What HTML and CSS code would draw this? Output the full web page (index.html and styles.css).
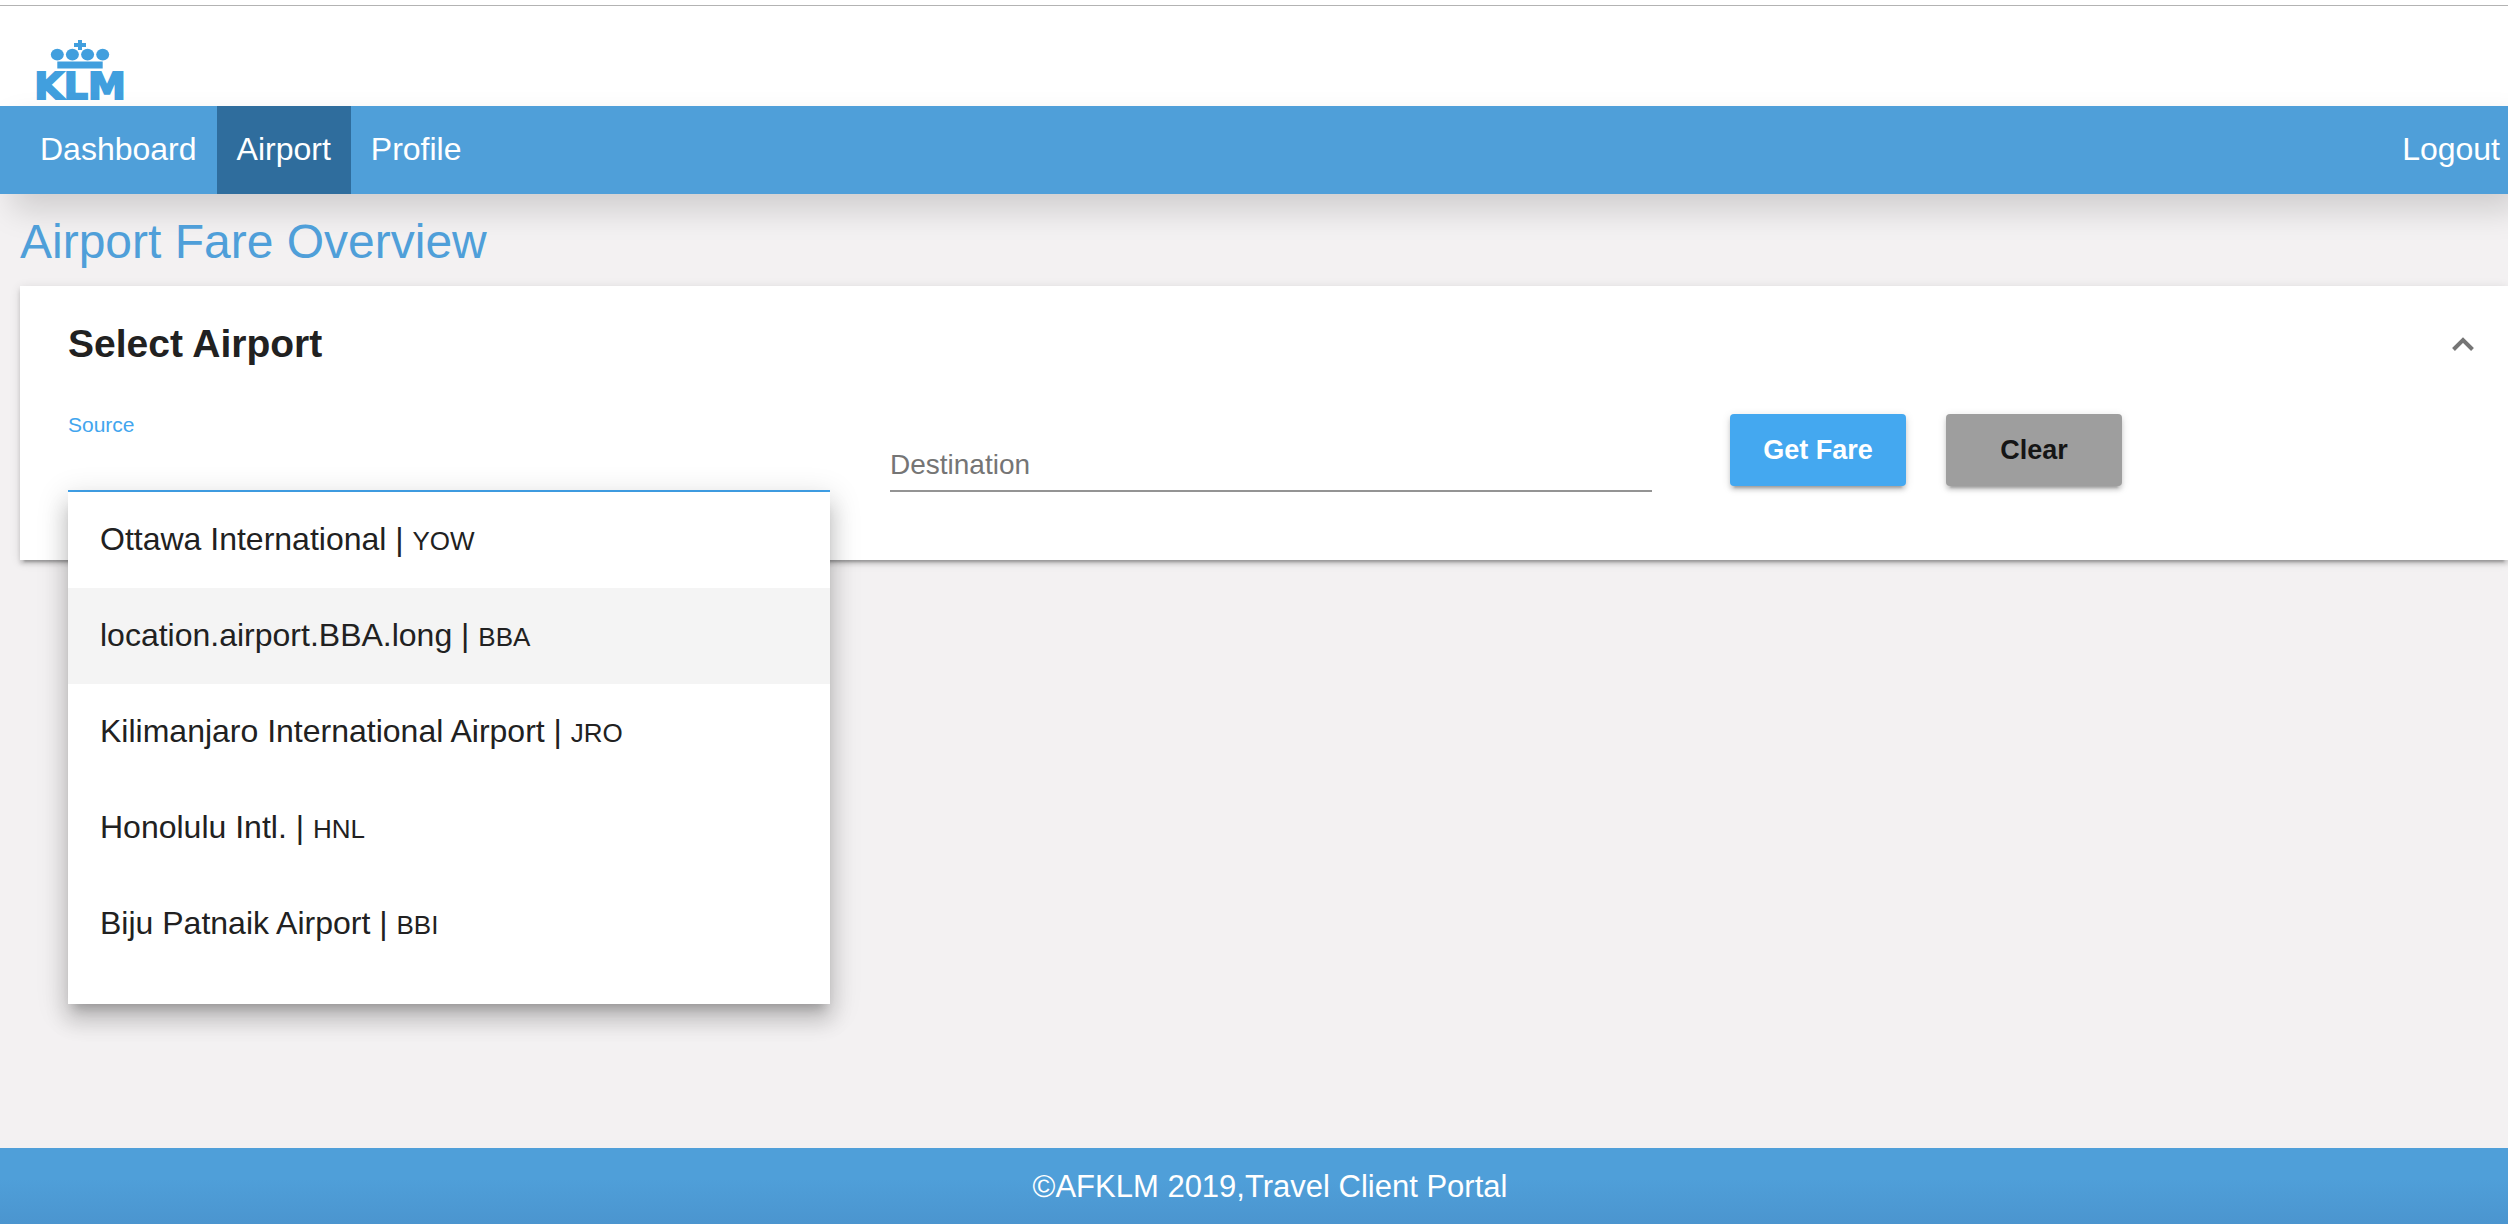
FILE: index.html
```html
<!DOCTYPE html>
<html lang="en">
<head>
<meta charset="utf-8">
<meta name="viewport" content="width=device-width, initial-scale=1">
<title>Airport Fare Overview</title>
<link rel="stylesheet" href="styles.css">
</head>
<body>
<header class="brand">
  <svg class="logo" viewBox="0 0 120 60" role="img" aria-label="KLM">
    <path d="M58 0h4v3h4v4h-4v3h-4V7h-4V3h4z"/>
    <ellipse cx="37.3" cy="14.6" rx="6.5" ry="5.8"/>
    <ellipse cx="52.4" cy="14.6" rx="6.5" ry="5.8"/>
    <ellipse cx="67.6" cy="14.6" rx="6.5" ry="5.8"/>
    <ellipse cx="82.7" cy="14.6" rx="6.5" ry="5.8"/>
    <path d="M37.3 21.6h45.4v6.9H37.3z"/>
    <text class="logo-text" x="60" y="59" text-anchor="middle">KLM</text>
  </svg>
</header>
<nav class="nav">
  <a class="nav-link" href="#dashboard">Dashboard</a>
  <a class="nav-link active" href="#airport" aria-current="page">Airport</a>
  <a class="nav-link" href="#profile">Profile</a>
  <a class="nav-link logout" href="#logout">Logout</a>
</nav>
<main class="main">
  <h1 class="page-title">Airport Fare Overview</h1>
  <section class="card">
    <div class="card-header">
      <h2 class="card-title">Select Airport</h2>
      <button class="toggle" type="button" aria-label="Collapse panel" aria-expanded="true">
        <svg class="chevron" viewBox="0 0 24 16"><path d="M3.500 13.500 13 4l9.500 9.500"/></svg>
      </button>
    </div>
    <form class="form">
      <div class="field">
        <label class="label" for="source">Source</label>
        <input class="input focused" id="source" type="text" autocomplete="off">
        <ul class="options" role="listbox" aria-label="Source airports">
          <li class="option" role="option">Ottawa International | <small class="code">YOW</small></li>
          <li class="option highlighted" role="option" aria-selected="true">location.airport.BBA.long | <small class="code">BBA</small></li>
          <li class="option" role="option">Kilimanjaro International Airport | <small class="code">JRO</small></li>
          <li class="option" role="option">Honolulu Intl. | <small class="code">HNL</small></li>
          <li class="option" role="option">Biju Patnaik Airport | <small class="code">BBI</small></li>
        </ul>
      </div>
      <div class="field">
        <input class="input" id="destination" type="text" placeholder="Destination" aria-label="Destination" autocomplete="off">
      </div>
      <div class="actions">
        <button class="button primary" type="button">Get Fare</button>
        <button class="button secondary" type="button">Clear</button>
      </div>
    </form>
  </section>
</main>
<footer class="footer">©AFKLM 2019,Travel Client Portal</footer>
</body>
</html>
```
FILE: styles.css
```css
* {
  box-sizing: border-box;
}

body {
  display: flex;
  flex-direction: column;
  min-height: 100vh;
  margin: 0;
  padding-top: 5px;
  background: #fff;
  color: #212121;
  font-family: "Liberation Sans", Arial, sans-serif;
  font-size: 32px;
}

.brand {
  display: flex;
  padding: 34px 20px 6px;
  border-top: 1px solid #b3b3b3;
}

.logo {
  width: 120px;
  height: 60px;
  overflow: visible;
  fill: #419fde;
}

.logo-text {
  font-family: "DejaVu Sans", sans-serif;
  font-size: 38px;
  font-weight: bold;
  stroke: #419fde;
  stroke-width: 2px;
}

.nav {
  position: relative;
  display: flex;
  padding: 0 8px 0 20px;
  background: #4f9fd9;
  box-shadow: 12px 16px 32px rgba(0, 0, 0, 0.15);
}

.nav-link {
  padding: 0 20px 2px;
  color: #fff;
  line-height: 86px;
  text-decoration: none;
}

.nav-link.active {
  background: #2f6d9d;
}

.nav-link.logout {
  margin-left: auto;
  padding-right: 0;
}

.main {
  flex: 1;
  padding-left: 20px;
  background: #f3f1f2;
}

.page-title {
  position: relative;
  margin: 0;
  padding-top: 4px;
  color: #4f9fd9;
  font-size: 48px;
  font-weight: normal;
  line-height: 88px;
}

.card {
  position: relative;
  padding: 0 34px 68px 48px;
  background: #fff;
  box-shadow: 0 6px 2px -4px rgba(0, 0, 0, 0.2), 0 4px 4px rgba(0, 0, 0, 0.14), 0 2px 10px rgba(0, 0, 0, 0.12);
}

.card-header {
  display: flex;
  align-items: center;
  justify-content: space-between;
  height: 116px;
}

.card-title {
  margin: 0;
  font-size: 39px;
}

.toggle {
  display: flex;
  padding: 0;
  border: 0;
  background: none;
}

.chevron {
  width: 24px;
  height: 16px;
  overflow: visible;
  fill: none;
  stroke: #757575;
  stroke-width: 4px;
}

.form {
  display: grid;
  grid-template-columns: repeat(3, minmax(0, 1fr));
  gap: 60px;
  align-items: end;
  padding-top: 12px;
}

.field {
  position: relative;
}

.label {
  display: block;
  padding-bottom: 2px;
  color: #42a5ee;
  font-size: 21px;
  line-height: 22px;
}

.input {
  display: block;
  width: 100%;
  height: 54px;
  padding: 2px 0 0;
  border: 0;
  border-bottom: 2px solid #949494;
  border-radius: 0;
  outline: 0;
  background: none;
  color: #212121;
  font: 28px "Liberation Sans", Arial, sans-serif;
}

.input::placeholder {
  color: #757575;
  opacity: 1;
}

.input.focused {
  border-color: #42a5ee;
}

.options {
  position: absolute;
  top: 100%;
  left: 0;
  z-index: 1;
  width: 100%;
  height: 512px;
  margin: 0;
  padding: 0;
  overflow: hidden;
  background: #fff;
  box-shadow: 0 10px 10px -6px rgba(0, 0, 0, 0.2), 0 16px 20px 2px rgba(0, 0, 0, 0.14), 0 6px 28px 4px rgba(0, 0, 0, 0.12);
  list-style: none;
}

.option {
  padding: 0 32px 2px;
  line-height: 94px;
  white-space: nowrap;
}

.option.highlighted {
  background: #f4f4f4;
}

.code {
  font-size: 26px;
  line-height: 32px;
}

.actions {
  display: flex;
  align-self: start;
  gap: 40px;
  padding-left: 18px;
}

.button {
  width: 176px;
  height: 72px;
  padding: 0;
  border: 0;
  border-radius: 4px;
  box-shadow: 0 6px 2px -4px rgba(0, 0, 0, 0.2), 0 4px 4px rgba(0, 0, 0, 0.14), 0 2px 10px rgba(0, 0, 0, 0.12);
  font: bold 27px "Liberation Sans", Arial, sans-serif;
}

.button.primary {
  background: #44a8f0;
  color: #fff;
}

.button.secondary {
  background: #9e9e9e;
  color: #151515;
}

.footer {
  padding: 2px 0 0 32px;
  background: linear-gradient(#4f9fd9 40%, #4b95cf);
  color: #fff;
  font-size: 31px;
  line-height: 74px;
  text-align: center;
}
```
